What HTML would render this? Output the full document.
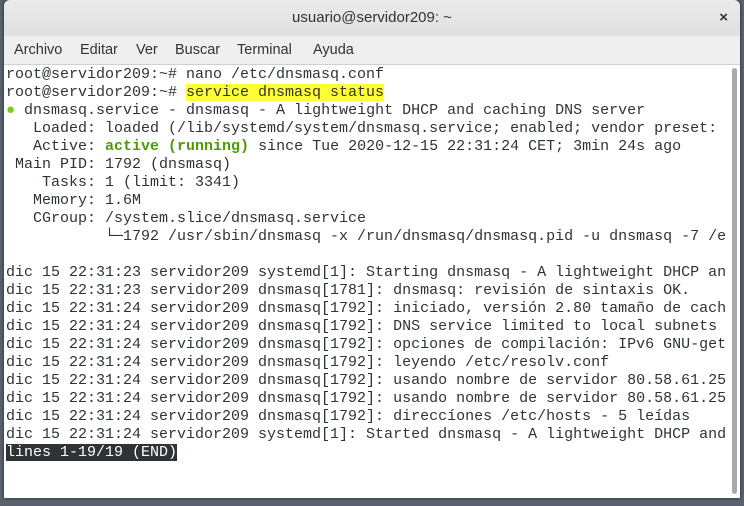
<!DOCTYPE html><html><head><style>
body{margin:0;width:744px;height:506px;background:#5a6270;overflow:hidden;position:relative;font-family:"Liberation Sans",sans-serif}
.win{position:absolute;left:4px;top:0;width:736px;height:498px;background:#fff;border-radius:6px 6px 0 0;overflow:hidden;box-shadow:0 0 3px #222}
.title{height:36px;background:linear-gradient(#ebebeb,#e0e0e0);text-align:center;line-height:36px;font-size:15px;color:#2e3436;position:relative}
.x{position:absolute;right:12px;top:0;font-size:15px;font-weight:bold;color:#333}
.menu{height:28px;background:#efefef;border-bottom:1px solid #d0d0d0;font-size:14.5px;color:#2e3436;line-height:28px;padding-left:10px}
.menu span{position:absolute}
.term{position:absolute;left:2px;top:66px;font-family:"Liberation Mono",monospace;font-size:15px;line-height:18px;color:#2e3436;white-space:pre}
.sb{position:absolute;right:3px;top:68px;width:5px;height:426px;background:#aaa;border-radius:3px}
.hl{background:#ffff33}
.g{color:#4e9a06;font-weight:bold}
.inv{background:#2e3436;color:#fff}
</style></head><body><div class="win">
<div class="title">usuario@servidor209: ~<span class="x">×</span></div>
<div class="menu"><span style="left:10px">Archivo</span><span style="left:76px">Editar</span><span style="left:132px">Ver</span><span style="left:171px">Buscar</span><span style="left:233px">Terminal</span><span style="left:309px">Ayuda</span></div>
<div class="sb"></div>
<div class="term">root@servidor209:~# nano /etc/dnsmasq.conf
root@servidor209:~# <span class="hl">service dnsmasq status</span>
<span style="color:#73d216">●</span> dnsmasq.service - dnsmasq - A lightweight DHCP and caching DNS server
   Loaded: loaded (/lib/systemd/system/dnsmasq.service; enabled; vendor preset:
   Active: <span class="g">active (running)</span> since Tue 2020-12-15 22:31:24 CET; 3min 24s ago
 Main PID: 1792 (dnsmasq)
    Tasks: 1 (limit: 3341)
   Memory: 1.6M
   CGroup: /system.slice/dnsmasq.service
           └─1792 /usr/sbin/dnsmasq -x /run/dnsmasq/dnsmasq.pid -u dnsmasq -7 /e

dic 15 22:31:23 servidor209 systemd[1]: Starting dnsmasq - A lightweight DHCP an
dic 15 22:31:23 servidor209 dnsmasq[1781]: dnsmasq: revisión de sintaxis OK.
dic 15 22:31:24 servidor209 dnsmasq[1792]: iniciado, versión 2.80 tamaño de cach
dic 15 22:31:24 servidor209 dnsmasq[1792]: DNS service limited to local subnets
dic 15 22:31:24 servidor209 dnsmasq[1792]: opciones de compilación: IPv6 GNU-get
dic 15 22:31:24 servidor209 dnsmasq[1792]: leyendo /etc/resolv.conf
dic 15 22:31:24 servidor209 dnsmasq[1792]: usando nombre de servidor 80.58.61.25
dic 15 22:31:24 servidor209 dnsmasq[1792]: usando nombre de servidor 80.58.61.25
dic 15 22:31:24 servidor209 dnsmasq[1792]: direccíones /etc/hosts - 5 leídas
dic 15 22:31:24 servidor209 systemd[1]: Started dnsmasq - A lightweight DHCP and
<span class="inv">lines 1-19/19 (END)</span></div>
</div></body></html>
